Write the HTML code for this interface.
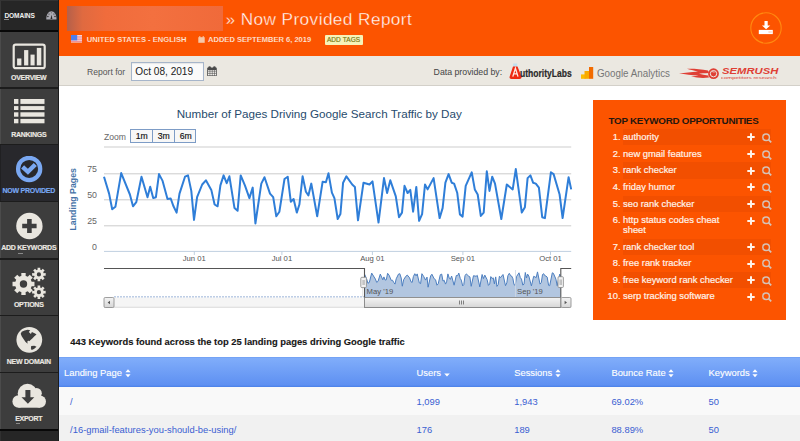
<!DOCTYPE html>
<html><head><meta charset="utf-8">
<style>
*{margin:0;padding:0;box-sizing:border-box}
html,body{width:800px;height:441px;overflow:hidden;background:#fff;font-family:"Liberation Sans",sans-serif;}
.a{position:absolute}
#side{position:absolute;left:0;top:0;width:59px;height:441px;background:#1c1c1c;}
#side .sec{position:absolute;left:0;width:57.5px;height:55px;background:#3d3d3d;border-left:1.2px solid #4b4b4b}
#side .lbl{position:absolute;left:0;width:57.5px;text-align:center;font-weight:bold;font-size:7px;color:#ebe8e2;white-space:nowrap;letter-spacing:-0.27px;-webkit-text-stroke:0.15px currentColor}
#hdr{position:absolute;left:59px;top:0;width:741px;height:56px;background:#fc5400;}
#bar{position:absolute;left:59px;top:56px;width:741px;height:29.8px;background:#ebe8e1;border-bottom:1.5px solid #d3d0c9}
</style></head><body>

<div id="side">
  <div class="a" style="left:0;top:0;width:57.5px;height:29.7px;background:#262626;border-top:1px solid #333;border-left:1.2px solid #363636"></div>
  <div class="a" style="left:4.4px;top:12px;font-weight:bold;font-size:6.6px;color:#f0f0f0;letter-spacing:-0.1px">DOMAINS</div>
  <div class="a" style="left:4.4px;top:18.8px;width:4.3px;height:0.8px;background:#8a8a8a"></div>
  <svg class="a" style="left:45.5px;top:11px" width="11" height="9" viewBox="0 0 11 9">
    <path d="M0.3,8.6 C0.1,3.2 2.6,0.2 5.4,0.2 C8.2,0.2 10.7,3.2 10.5,8.6 Z" fill="#a9a9b1"/>
    <circle cx="1.9" cy="5.5" r="0.75" fill="#2a2a2a"/><circle cx="9" cy="5.5" r="0.75" fill="#2a2a2a"/>
    <circle cx="3" cy="3" r="0.6" fill="#2a2a2a"/><circle cx="7.9" cy="3" r="0.6" fill="#2a2a2a"/><circle cx="5.4" cy="1.7" r="0.5" fill="#555"/>
    <path d="M4.5,8 L5.5,3.8 L6.4,8 Z" fill="#2a2a2a"/>
  </svg>

  <!-- OVERVIEW -->
  <div class="sec" style="top:32px;height:54.9px"></div>
  <svg class="a" style="left:12px;top:42.5px" width="35" height="28" viewBox="0 0 35 28">
    <rect x="1.7" y="1.6" width="31" height="23.6" rx="2" fill="none" stroke="#e9e6df" stroke-width="2.2"/>
    <rect x="5.1" y="15.5" width="4.3" height="6.9" fill="#e9e6df"/>
    <rect x="12.1" y="7.1" width="4.2" height="15.3" fill="#e9e6df"/>
    <rect x="18.5" y="11.6" width="4.1" height="10.8" fill="#e9e6df"/>
    <rect x="24.8" y="4.9" width="4.5" height="17.5" fill="#e9e6df"/>
  </svg>
  <div class="lbl" style="top:73.8px">OVERVIEW</div>

  <!-- RANKINGS -->
  <div class="sec" style="top:88.9px;height:55.1px"></div>
  <svg class="a" style="left:14px;top:99px" width="31" height="25" viewBox="0 0 31 25">
    <rect x="0" y="0" width="4.4" height="4.9" fill="#e9e6df"/><rect x="6.4" y="0" width="24.1" height="4.9" fill="#e9e6df"/>
    <rect x="0" y="7.1" width="4.4" height="3.9" fill="#e9e6df"/><rect x="6.4" y="7.1" width="24.1" height="3.9" fill="#e9e6df"/>
    <rect x="0" y="13.3" width="4.4" height="4.4" fill="#e9e6df"/><rect x="6.4" y="13.3" width="24.1" height="4.4" fill="#e9e6df"/>
    <rect x="0" y="19.9" width="4.4" height="4.4" fill="#e9e6df"/><rect x="6.4" y="19.9" width="24.1" height="4.4" fill="#e9e6df"/>
  </svg>
  <div class="lbl" style="top:130.7px">RANKINGS</div>

  <!-- NOW PROVIDED -->
  <div class="sec" style="top:145.3px;height:55.7px;background:#28282c;border-left:1.3px solid #202022"></div>
  <svg class="a" style="left:15px;top:156px" width="29" height="29" viewBox="0 0 29 29">
    <circle cx="14.15" cy="12.95" r="11.1" fill="none" stroke="#7aa8f2" stroke-width="4.2"/>
    <path d="M7.6,10.9 L12.9,15.8 L20.3,8.5" fill="none" stroke="#7aa8f2" stroke-width="4.4" stroke-linecap="butt" stroke-linejoin="miter"/>
  </svg>
  <div class="lbl" style="top:187.2px;color:#79a8f4">NOW PROVIDED</div>

  <!-- ADD KEYWORDS -->
  <div class="sec" style="top:201.8px;height:55.9px"></div>
  <svg class="a" style="left:15px;top:212px" width="29" height="29" viewBox="0 0 29 29">
    <circle cx="14.4" cy="14" r="13.2" fill="#e9e6df"/>
    <path d="M14.4,7 V21 M7.2,14 H21.6" stroke="#3d3d3d" stroke-width="4.6"/>
  </svg>
  <div class="lbl" style="top:244.3px">ADD KEYWORDS</div>
  <div class="a" style="left:17.8px;top:253px;width:5px;height:0.9px;background:#8a8a8a"></div>

  <!-- OPTIONS -->
  <div class="sec" style="top:260px;height:54.6px"></div>
  <svg class="a" style="left:12px;top:266px" width="36" height="34" viewBox="0 0 36 34">
    <g fill="#e9e6df">
      <path fill-rule="evenodd" d="M19.26,14.79 L19.62,15.85 L22.48,15.81 L22.48,20.19 L19.62,20.15 L19.26,21.21 L18.76,22.22 L20.81,24.22 L17.72,27.31 L15.72,25.26 L14.71,25.76 L13.65,26.12 L13.69,28.98 L9.31,28.98 L9.35,26.12 L8.29,25.76 L7.28,25.26 L5.28,27.31 L2.19,24.22 L4.24,22.22 L3.74,21.21 L3.38,20.15 L0.52,20.19 L0.52,15.81 L3.38,15.85 L3.74,14.79 L4.24,13.78 L2.19,11.78 L5.28,8.69 L7.28,10.74 L8.29,10.24 L9.35,9.88 L9.31,7.02 L13.69,7.02 L13.65,9.88 L14.71,10.24 L15.72,10.74 L17.72,8.69 L20.81,11.78 L18.76,13.78 Z M15.20,18.00 A3.7,3.7 0 1 0 7.80,18.00 A3.7,3.7 0 1 0 15.20,18.00 Z"/><path fill-rule="evenodd" d="M31.43,6.52 L31.64,7.14 L33.67,7.05 L33.67,9.75 L31.64,9.66 L31.43,10.28 L31.14,10.86 L32.64,12.23 L30.73,14.14 L29.36,12.64 L28.78,12.93 L28.16,13.14 L28.25,15.17 L25.55,15.17 L25.64,13.14 L25.02,12.93 L24.44,12.64 L23.07,14.14 L21.16,12.23 L22.66,10.86 L22.37,10.28 L22.16,9.66 L20.13,9.75 L20.13,7.05 L22.16,7.14 L22.37,6.52 L22.66,5.94 L21.16,4.57 L23.07,2.66 L24.44,4.16 L25.02,3.87 L25.64,3.66 L25.55,1.63 L28.25,1.63 L28.16,3.66 L28.78,3.87 L29.36,4.16 L30.73,2.66 L32.64,4.57 L31.14,5.94 Z M29.00,8.40 A2.1,2.1 0 1 0 24.80,8.40 A2.1,2.1 0 1 0 29.00,8.40 Z"/><path fill-rule="evenodd" d="M31.43,24.32 L31.64,24.94 L33.67,24.85 L33.67,27.55 L31.64,27.46 L31.43,28.08 L31.14,28.66 L32.64,30.03 L30.73,31.94 L29.36,30.44 L28.78,30.73 L28.16,30.94 L28.25,32.97 L25.55,32.97 L25.64,30.94 L25.02,30.73 L24.44,30.44 L23.07,31.94 L21.16,30.03 L22.66,28.66 L22.37,28.08 L22.16,27.46 L20.13,27.55 L20.13,24.85 L22.16,24.94 L22.37,24.32 L22.66,23.74 L21.16,22.37 L23.07,20.46 L24.44,21.96 L25.02,21.67 L25.64,21.46 L25.55,19.43 L28.25,19.43 L28.16,21.46 L28.78,21.67 L29.36,21.96 L30.73,20.46 L32.64,22.37 L31.14,23.74 Z M29.00,26.20 A2.1,2.1 0 1 0 24.80,26.20 A2.1,2.1 0 1 0 29.00,26.20 Z"/>
    </g>
  </svg>
  <div class="lbl" style="top:301.2px">OPTIONS</div>

  <!-- NEW DOMAIN -->
  <div class="sec" style="top:316.2px;height:55.6px"></div>
  <svg class="a" style="left:15px;top:326px" width="29" height="29" viewBox="0 0 29 29">
    <circle cx="14.3" cy="13.8" r="12.9" fill="#e9e6df"/>
    <path d="M5.7,7.8 L6.7,5.7 L9.5,4.6 L12.7,3.8 L15.2,4.3 L13.8,6 L15.9,8.1 L16.9,6 L20.1,7.4 L21.5,8.5 L19.4,10.2 L17.3,12.4 L15.5,14.1 L13.8,15.9 L12.4,17.6 L10.6,15.9 L8.5,13.1 L6.7,10.2 Z" fill="#3d3d3d"/>
    <circle cx="13.6" cy="16" r="1.3" fill="#e9e6df"/>
    <path d="M16.2,20.1 L19.4,19.7 L21.5,20.8 L19,22.9 L16.6,23.9 L15.9,22.2 Z" fill="#3d3d3d"/>
  </svg>
  <div class="lbl" style="top:358.3px">NEW DOMAIN</div>

  <!-- EXPORT -->
  <div class="sec" style="top:373.1px;height:55.9px"></div>
  <svg class="a" style="left:12px;top:382px" width="35" height="27" viewBox="0 0 35 27">
    <g fill="#e9e6df">
      <circle cx="15.5" cy="11.6" r="9.8"/><circle cx="24.6" cy="11.2" r="5.2"/>
      <circle cx="6.6" cy="19.5" r="6.2"/><circle cx="27.9" cy="19.6" r="6.1"/>
      <rect x="6.6" y="12" width="21.3" height="13.7"/>
    </g>
    <path d="M13.4,8 H18.4 V15.3 H22.3 L15.9,21.8 L9.5,15.3 H13.4 Z" fill="#3d3d3d"/>
  </svg>
  <div class="lbl" style="top:414.5px">EXPORT</div>
  <div class="a" style="left:15.9px;top:423.2px;width:4.4px;height:0.9px;background:#8a8a8a"></div>

  <div class="sec" style="top:431px;height:20px;background:#262626;border-left-color:#303030"></div>
  <div class="a" style="left:0;top:429px;width:57.5px;height:2px;background:#080808"></div>
  <div class="a" style="left:0;top:29.7px;width:57.5px;height:2.3px;background:#080808"></div>
</div>

<!-- HEADER -->
<div id="hdr">
  <div class="a" style="left:7.7px;top:5.8px;width:156.3px;height:24.9px;background:linear-gradient(90deg,#b5604a 0%,#e06a40 10%,#f06c3c 25%,#f3703f 55%,#f06a3a 100%)"></div>
  <div class="a" style="left:166.5px;top:9.3px;font-size:17.2px;color:#fff;white-space:nowrap;letter-spacing:0.43px;-webkit-text-stroke:0.35px #fc5400;paint-order:normal">» Now Provided Report</div>
  <svg class="a" style="left:11.8px;top:35.4px" width="11.2" height="7.6" viewBox="0 0 11.2 7.6">
    <rect width="11.2" height="7.6" fill="#f4d4d8"/>
    <rect x="0" y="1.4" width="11.2" height="1.1" fill="#f08a8e"/><rect x="0" y="3.6" width="11.2" height="1.1" fill="#f08a8e"/><rect x="0" y="5.8" width="11.2" height="1.1" fill="#f08a8e"/>
    <rect width="6.2" height="5.4" fill="#4f7ef0"/>
  </svg>
  <div class="a" style="left:27.8px;top:35.2px;font-weight:bold;font-size:7.6px;color:#fde8dc;white-space:nowrap;letter-spacing:0px;-webkit-text-stroke:0.1px #fc5400">UNITED STATES - ENGLISH</div>
  <svg class="a" style="left:139.2px;top:36px" width="7" height="7" viewBox="0 0 7 7">
    <rect x="0.3" y="1.2" width="6.4" height="5.6" fill="#f6c8a8"/>
    <rect x="1.3" y="0" width="1" height="2" fill="#f6c8a8"/><rect x="4.7" y="0" width="1" height="2" fill="#f6c8a8"/>
  </svg>
  <div class="a" style="left:149px;top:35.2px;font-weight:bold;font-size:7.55px;color:#fde8dc;white-space:nowrap;letter-spacing:0px;-webkit-text-stroke:0.1px #fc5400">ADDED SEPTEMBER 6, 2019</div>
  <div class="a" style="left:265.5px;top:34.5px;width:38.2px;height:10.4px;background:#f7f3b8;border-radius:1px;font-size:6.5px;color:#76750f;text-align:center;line-height:10.8px;white-space:nowrap;letter-spacing:0.1px;-webkit-text-stroke:0.15px #76750f">ADD TAGS</div>
  <svg class="a" style="left:690px;top:11px" width="34" height="34" viewBox="0 0 34 34">
    <circle cx="17" cy="17" r="15.2" fill="none" stroke="#ff8a10" stroke-width="1.1"/>
    <path d="M15.5,9.9 H18.7 V14.4 H21.3 L17.1,18.3 L12.9,14.4 H15.5 Z" fill="#fff"/>
    <rect x="9.8" y="18.9" width="14" height="4.2" fill="#fff"/>
    <rect x="19.6" y="20.5" width="1.1" height="1" fill="#f4a070"/><rect x="21.4" y="20.5" width="1.1" height="1" fill="#f4a070"/>
  </svg>
</div>

<!-- REPORT BAR -->
<div id="bar">
  <div class="a" style="left:28px;top:10.9px;font-size:8.6px;color:#555;white-space:nowrap">Report for</div>
  <div class="a" style="left:72px;top:5.6px;width:72.8px;height:19.3px;background:#fafafa;border:1.3px solid #a6b5ca;box-shadow:inset 0 1px 1px rgba(0,0,0,0.08)"></div>
  <div class="a" style="left:76.3px;top:9.8px;font-size:10.1px;color:#222;white-space:nowrap">Oct 08, 2019</div>
  <svg class="a" style="left:148px;top:9.7px" width="10" height="10.4" viewBox="0 0 10 10.4">
    <rect x="0.2" y="1.6" width="9.6" height="8.6" rx="0.8" fill="#4a4a4a"/>
    <circle cx="2.6" cy="1.6" r="1.3" fill="#4a4a4a"/><circle cx="7.4" cy="1.6" r="1.3" fill="#4a4a4a"/>
    <g fill="#f4f2ee">
      <rect x="1" y="4.2" width="1.7" height="1.4"/><rect x="3.2" y="4.2" width="1.7" height="1.4"/><rect x="5.4" y="4.2" width="1.7" height="1.4"/><rect x="7.6" y="4.2" width="1.5" height="1.4"/>
      <rect x="1" y="6.1" width="1.7" height="1.4"/><rect x="3.2" y="6.1" width="1.7" height="1.4"/><rect x="5.4" y="6.1" width="1.7" height="1.4"/><rect x="7.6" y="6.1" width="1.5" height="1.4"/>
      <rect x="1" y="8" width="1.7" height="1.4"/><rect x="3.2" y="8" width="1.7" height="1.4"/><rect x="5.4" y="8" width="1.7" height="1.4"/><rect x="7.6" y="8" width="1.5" height="1.4"/>
    </g>
  </svg>
  <div class="a" style="left:374.6px;top:10.5px;font-size:8.75px;color:#444;white-space:nowrap">Data provided by:</div>
  <!-- AuthorityLabs -->
  <svg class="a" style="left:449.5px;top:6.5px" width="13" height="17" viewBox="0 0 13 17">
    <rect x="4.2" y="0.5" width="4" height="3.2" fill="#bfe0f0"/>
    <path d="M4,3.4 H8.5 L12.5,13.5 C12.9,15 12,16 10.5,16 H2.5 C1,16 0.2,15 0.6,13.8 Z" fill="#ee2a12"/>
    <path d="M3.8,13.6 L6.4,5.2 L9,13.6 M4.9,10.8 H7.9" stroke="#ffe8e0" stroke-width="1.3" fill="none"/>
  </svg>
  <div class="a" style="left:461.3px;top:11.8px;font-weight:bold;font-size:10.3px;color:#2a2a2a;-webkit-text-stroke:0.2px #2a2a2a;white-space:nowrap;transform:scaleX(0.83);transform-origin:left top">uthorityLabs</div>
  <!-- GA -->
  <svg class="a" style="left:521.5px;top:10.6px" width="13" height="12" viewBox="0 0 13 12">
    <rect x="0" y="7.4" width="4.5" height="4.4" fill="#fbbc04"/>
    <rect x="3.5" y="4" width="4.8" height="7.8" fill="#f9ab00"/>
    <rect x="8" y="0" width="4.2" height="11.8" fill="#f26b00"/>
  </svg>
  <div class="a" style="left:537.7px;top:10.7px;font-size:11px;color:#767676;white-space:nowrap;transform:scaleX(0.89);transform-origin:left top">Google Analytics</div>
  <!-- SEMrush -->
  <svg class="a" style="left:619.5px;top:11.6px" width="42" height="12" viewBox="0 0 42 12">
    <g fill="#df3f35">
      <path d="M0,5.6 C6,5 12,4.2 19,3.6 C14,2.6 11,1.6 8,0.8 C15,0.6 22,1.2 29,2.5 L30,5 C25,5.2 22,5.5 20,5.8 C23,6.4 26,7 29,7.4 L30,9.5 C24,10.5 18,9.8 12,8.6 C16,8.4 18,8 19.5,7.6 C13,7.2 6,6.4 0,5.6 Z"/>
      <circle cx="34.5" cy="5.7" r="5.4"/>
    </g>
    <circle cx="34.5" cy="5.7" r="3.2" fill="none" stroke="#ece9e3" stroke-width="1"/>
    <path d="M33.2,3.6 L35.5,4.2" stroke="#ece9e3" stroke-width="0.8"/>
  </svg>
  <div class="a" style="left:663px;top:11.1px;font-weight:bold;font-style:italic;font-size:8.2px;line-height:9px;color:#df3f35;white-space:nowrap;transform:scaleX(1.375);transform-origin:left top">SEMRUSH</div>
  <div class="a" style="left:662px;top:18.8px;font-size:4.2px;line-height:5px;color:#df3f35;white-space:nowrap;transform:scaleX(1.42);transform-origin:left top">competitors research</div>
</div>

<!-- CHART -->
<div class="a" style="left:176.7px;top:106.5px;font-size:11.65px;color:#274b6d;white-space:nowrap">Number of Pages Driving Google Search Traffic by Day</div>
<div class="a" style="left:104px;top:132px;font-size:8.6px;color:#666;white-space:nowrap">Zoom</div>
<div class="a" style="left:130.3px;top:129px;width:65.7px;height:13.8px;border:1px solid #7d9cc6;background:#f7f7f7"></div>
<div class="a" style="left:152.2px;top:129px;width:1px;height:13.8px;background:#7d9cc6"></div>
<div class="a" style="left:174px;top:129px;width:1px;height:13.8px;background:#7d9cc6"></div>
<div class="a" style="left:131px;top:130.9px;width:21.5px;text-align:center;font-size:8.7px;color:#111;-webkit-text-stroke:0.15px #111">1m</div>
<div class="a" style="left:153px;top:130.9px;width:21.5px;text-align:center;font-size:8.7px;color:#111;-webkit-text-stroke:0.15px #111">3m</div>
<div class="a" style="left:175px;top:130.9px;width:21.5px;text-align:center;font-size:8.7px;color:#111;-webkit-text-stroke:0.15px #111">6m</div>

<svg class="a" style="left:0;top:0" width="590" height="320" viewBox="0 0 590 320">
  <rect x="104" y="146.3" width="467.2" height="1.4" fill="#dcdcdc"/>
  <rect x="104" y="173.1" width="467.2" height="1.3" fill="#d8d8d8"/>
  <rect x="104" y="199.1" width="467.2" height="1.3" fill="#d8d8d8"/>
  <rect x="104" y="225.1" width="467.2" height="1.3" fill="#d8d8d8"/>
  <rect x="104" y="250.9" width="467.2" height="1" fill="#c0d0e0"/>
  <g stroke="#c0d0e0" stroke-width="1">
    <path d="M194.3,251 V255 M281.9,251 V255 M372.4,251 V255 M462.9,251 V255 M550.5,251 V255"/>
  </g>
  <g font-family="Liberation Sans" font-size="8.8" fill="#666" text-anchor="end">
    <text x="97" y="172">75</text><text x="97" y="198">50</text><text x="97" y="224">25</text><text x="97" y="250">0</text>
  </g>
  <g font-family="Liberation Sans" font-size="7.7" fill="#555" text-anchor="middle">
    <text x="194.3" y="261.3">Jun 01</text><text x="281.9" y="261.3">Jul 01</text><text x="372.4" y="261.3">Aug 01</text><text x="462.9" y="261.3">Sep 01</text><text x="550.5" y="261.3">Oct 01</text>
  </g>
  <text transform="translate(76.2,199.3) rotate(-90)" font-family="Liberation Sans" font-weight="bold" font-size="8.8" fill="#4572a7" text-anchor="middle">Landing Pages</text>
  <path d="M104.0,176.7 L109.1,193.6 L112.2,209.3 L115.4,206.8 L121.2,173.1 L129.9,194.5 L133.0,206.3 L136.3,202.1 L141.5,176.7 L147.5,197.2 L150.2,186.8 L153.2,198.1 L155.9,197.2 L159.0,174.1 L162.6,180.9 L167.5,199.0 L170.7,198.5 L173.5,206.3 L176.6,212.6 L179.5,193.6 L185.0,176.7 L188.0,175.4 L191.3,190.9 L194.0,219.9 L197.1,197.2 L202.2,184.5 L205.9,180.3 L211.3,189.9 L214.6,204.5 L217.6,206.3 L220.4,185.4 L223.6,175.4 L226.7,183.2 L229.4,176.3 L234.5,208.1 L237.6,210.8 L240.7,175.4 L244.9,185.4 L249.4,198.1 L252.7,187.6 L255.4,223.5 L261.3,183.6 L264.5,177.2 L270.0,193.6 L273.2,197.2 L276.3,216.3 L279.4,211.7 L284.5,179.0 L287.7,176.7 L290.8,201.7 L293.6,199.0 L296.8,212.6 L299.4,204.5 L302.6,176.3 L305.9,191.8 L308.4,195.4 L311.3,183.6 L317.2,216.3 L322.6,181.8 L325.9,182.2 L328.5,173.3 L331.9,192.7 L334.4,198.1 L337.7,219.0 L340.4,214.1 L343.1,182.7 L346.4,176.3 L352.2,184.5 L354.9,186.9 L358.0,220.3 L363.5,182.7 L369.5,184.5 L372.5,181.4 L378.5,222.6 L384.0,178.1 L387.1,193.0 L390.3,180.3 L395.8,196.3 L399.0,217.2 L402.0,212.6 L404.5,185.8 L407.6,193.0 L410.3,189.9 L413.1,211.7 L416.3,186.9 L419.1,220.8 L422.1,214.1 L425.0,184.5 L427.6,189.4 L433.6,178.1 L439.6,218.1 L442.6,208.1 L445.4,182.7 L448.6,174.1 L451.7,182.7 L454.1,183.6 L457.2,192.7 L459.9,214.4 L462.6,216.6 L465.7,185.8 L471.7,172.3 L474.8,189.4 L477.7,194.5 L480.8,215.9 L483.7,212.6 L486.8,171.3 L489.5,190.9 L492.2,176.7 L495.0,183.6 L501.3,219.0 L506.8,184.5 L512.7,189.4 L515.8,169.1 L521.8,212.6 L524.9,207.2 L527.6,178.1 L530.4,175.4 L533.1,182.7 L535.8,183.6 L538.9,187.6 L542.2,217.2 L544.9,218.1 L550.9,172.3 L553.6,174.1 L559.6,194.5 L562.6,218.1 L568.6,177.2 L571.2,189.4" fill="none" stroke="#2f7ed8" stroke-width="2" stroke-linejoin="round"/>

  <!-- navigator -->
  <path d="M364.5,274.1 L366.6,278.8 L367.9,283.2 L369.3,282.5 L371.7,273.1 L375.4,279.1 L376.7,282.4 L378.1,281.2 L380.3,274.1 L382.8,279.8 L383.9,276.9 L385.2,280.1 L386.3,279.8 L387.6,273.3 L389.1,275.2 L391.2,280.3 L392.5,280.2 L393.7,282.4 L395.0,284.1 L396.2,278.8 L398.5,274.1 L399.8,273.7 L401.2,278.0 L402.3,286.2 L403.6,279.8 L405.8,276.3 L407.3,275.1 L409.6,277.8 L411.0,281.9 L412.2,282.4 L413.4,276.5 L414.8,273.7 L416.1,275.9 L417.2,273.9 L419.3,282.9 L420.6,283.6 L421.9,273.7 L423.7,276.5 L425.6,280.1 L427.0,277.1 L428.1,287.2 L430.6,276.0 L431.9,274.2 L434.2,278.8 L435.6,279.8 L436.9,285.2 L438.2,283.9 L440.3,274.7 L441.7,274.1 L443.0,281.1 L444.2,280.3 L445.5,284.1 L446.6,281.9 L447.9,273.9 L449.3,278.3 L450.4,279.3 L451.6,276.0 L454.1,285.2 L456.3,275.5 L457.7,275.6 L458.8,273.1 L460.3,278.6 L461.3,280.1 L462.7,285.9 L463.8,284.6 L465.0,275.7 L466.3,273.9 L468.8,276.3 L469.9,276.9 L471.2,286.3 L473.5,275.7 L476.1,276.3 L477.3,275.4 L479.8,286.9 L482.1,274.5 L483.4,278.6 L484.8,275.1 L487.1,279.6 L488.4,285.4 L489.7,284.1 L490.8,276.6 L492.1,278.6 L493.2,277.8 L494.4,283.9 L495.7,276.9 L496.9,286.4 L498.2,284.6 L499.4,276.3 L500.5,277.6 L503.0,274.5 L505.5,285.7 L506.8,282.9 L507.9,275.7 L509.3,273.3 L510.6,275.7 L511.6,276.0 L512.9,278.6 L514.0,284.6 L515.2,285.3 L516.5,276.6 L519.0,272.8 L520.3,277.6 L521.5,279.1 L522.8,285.1 L524.0,284.1 L525.3,272.5 L526.5,278.0 L527.6,274.1 L528.8,276.0 L531.4,285.9 L533.7,276.3 L536.2,277.6 L537.5,271.9 L540.0,284.1 L541.3,282.6 L542.5,274.5 L543.7,273.7 L544.8,275.7 L545.9,276.0 L547.2,277.1 L548.6,285.4 L549.7,285.7 L552.3,272.8 L553.4,273.3 L555.9,279.1 L557.2,285.7 L559.7,274.2 L560.8,277.6 L560.8,297 L364.5,297 Z" fill="#b2c6e0"/>
  <path d="M364.5,274.1 L366.6,278.8 L367.9,283.2 L369.3,282.5 L371.7,273.1 L375.4,279.1 L376.7,282.4 L378.1,281.2 L380.3,274.1 L382.8,279.8 L383.9,276.9 L385.2,280.1 L386.3,279.8 L387.6,273.3 L389.1,275.2 L391.2,280.3 L392.5,280.2 L393.7,282.4 L395.0,284.1 L396.2,278.8 L398.5,274.1 L399.8,273.7 L401.2,278.0 L402.3,286.2 L403.6,279.8 L405.8,276.3 L407.3,275.1 L409.6,277.8 L411.0,281.9 L412.2,282.4 L413.4,276.5 L414.8,273.7 L416.1,275.9 L417.2,273.9 L419.3,282.9 L420.6,283.6 L421.9,273.7 L423.7,276.5 L425.6,280.1 L427.0,277.1 L428.1,287.2 L430.6,276.0 L431.9,274.2 L434.2,278.8 L435.6,279.8 L436.9,285.2 L438.2,283.9 L440.3,274.7 L441.7,274.1 L443.0,281.1 L444.2,280.3 L445.5,284.1 L446.6,281.9 L447.9,273.9 L449.3,278.3 L450.4,279.3 L451.6,276.0 L454.1,285.2 L456.3,275.5 L457.7,275.6 L458.8,273.1 L460.3,278.6 L461.3,280.1 L462.7,285.9 L463.8,284.6 L465.0,275.7 L466.3,273.9 L468.8,276.3 L469.9,276.9 L471.2,286.3 L473.5,275.7 L476.1,276.3 L477.3,275.4 L479.8,286.9 L482.1,274.5 L483.4,278.6 L484.8,275.1 L487.1,279.6 L488.4,285.4 L489.7,284.1 L490.8,276.6 L492.1,278.6 L493.2,277.8 L494.4,283.9 L495.7,276.9 L496.9,286.4 L498.2,284.6 L499.4,276.3 L500.5,277.6 L503.0,274.5 L505.5,285.7 L506.8,282.9 L507.9,275.7 L509.3,273.3 L510.6,275.7 L511.6,276.0 L512.9,278.6 L514.0,284.6 L515.2,285.3 L516.5,276.6 L519.0,272.8 L520.3,277.6 L521.5,279.1 L522.8,285.1 L524.0,284.1 L525.3,272.5 L526.5,278.0 L527.6,274.1 L528.8,276.0 L531.4,285.9 L533.7,276.3 L536.2,277.6 L537.5,271.9 L540.0,284.1 L541.3,282.6 L542.5,274.5 L543.7,273.7 L544.8,275.7 L545.9,276.0 L547.2,277.1 L548.6,285.4 L549.7,285.7 L552.3,272.8 L553.4,273.3 L555.9,279.1 L557.2,285.7 L559.7,274.2 L560.8,277.6" fill="none" stroke="#4d7fc0" stroke-width="1"/>
  <path d="M114,297 H364.5" stroke="#7d9ccc" stroke-width="1" stroke-dasharray="2,1"/>
  <rect x="362" y="285" width="0.8" height="12" fill="#e4e4e4"/>
  <rect x="515" y="270" width="0.8" height="27" fill="#cfd8e4"/>
  <g font-family="Liberation Sans" font-size="7.7" fill="#555">
    <text x="366.5" y="294.3">May '19</text><text x="517" y="294.3">Sep '19</text>
  </g>
  <path d="M104,268.5 H364.5 V297.5 M560.8,297.5 V268.5 H571.2" fill="none" stroke="#555" stroke-width="1.1"/>
  <!-- scrollbar -->
  <rect x="104" y="297.5" width="467.2" height="10" fill="#f5f5f5"/><rect x="104" y="306.8" width="467.2" height="0.8" fill="#d2d2d2"/>
  <defs><linearGradient id="sg" x1="0" y1="0" x2="0" y2="1"><stop offset="0" stop-color="#f4f4f4"/><stop offset="1" stop-color="#d6d6d6"/></linearGradient></defs>
  <rect x="364.5" y="297.5" width="196.3" height="10" fill="url(#sg)" stroke="#777" stroke-width="0.8"/>
  <path d="M459.5,300.5 V304.5 M461.5,300.5 V304.5 M463.5,300.5 V304.5" stroke="#666" stroke-width="0.8"/>
  <rect x="104" y="297.5" width="10" height="10" rx="1.2" fill="url(#sg)" stroke="#888" stroke-width="0.8"/>
  <path d="M107.6,302.5 L110,300.7 V304.3 Z" fill="#555"/>
  <rect x="561" y="297.5" width="10" height="10" rx="1.2" fill="url(#sg)" stroke="#888" stroke-width="0.8"/>
  <path d="M567,302.5 L564.6,300.7 V304.3 Z" fill="#555"/>
  <!-- handles -->
  <rect x="360.8" y="277.3" width="5.6" height="10.3" rx="1" fill="#f2f2f2" stroke="#888" stroke-width="0.8"/>
  <path d="M363,280 V285 M364.2,280 V285" stroke="#888" stroke-width="0.6"/>
  <rect x="558" y="276.7" width="5.4" height="10.8" rx="1" fill="#f2f2f2" stroke="#888" stroke-width="0.8"/>
  <path d="M560.1,279.5 V285 M561.3,279.5 V285" stroke="#888" stroke-width="0.6"/>
</svg>

<!-- KEYWORD BOX -->
<div class="a" style="left:593px;top:100px;width:193.3px;height:219.6px;background:#fc5400">
<div class="a" style="left:15.5px;top:14.8px;font-weight:bold;font-size:9.8px;letter-spacing:-0.26px;color:#26170f;white-space:nowrap">TOP KEYWORD OPPORTUNITIES</div>
<div class="a" style="left:30px;top:28.7px;width:148px;height:16.7px;background:#f24f00"></div>
<div class="a" style="left:0;top:30.9px;width:27.5px;text-align:right;font-size:9.4px;color:#fff3ea;white-space:nowrap;-webkit-text-stroke:0.2px #fff3ea">1.</div>
<div class="a" style="left:30px;top:30.9px;font-size:9.4px;line-height:9.6px;color:#fff3ea;white-space:nowrap;padding-top:1px;-webkit-text-stroke:0.2px #fff3ea">authority</div>
<svg class="a" style="left:154.4px;top:33.3px" width="8" height="8" viewBox="0 0 8 8"><path d="M4,0.3 V7.7 M0.3,4 H7.7" stroke="#fff3ea" stroke-width="2"/></svg>
<svg class="a" style="left:168.5px;top:32.8px" width="10" height="10" viewBox="0 0 10 10"><circle cx="4.1" cy="4.2" r="3.3" fill="none" stroke="#d6c2b6" stroke-width="1.45"/><path d="M6.5,6.6 L9.2,9.3" stroke="#d6c2b6" stroke-width="1.7"/></svg>
<div class="a" style="left:0;top:47.6px;width:27.5px;text-align:right;font-size:9.4px;color:#fff3ea;white-space:nowrap;-webkit-text-stroke:0.2px #fff3ea">2.</div>
<div class="a" style="left:30px;top:47.6px;font-size:9.4px;line-height:9.6px;color:#fff3ea;white-space:nowrap;padding-top:1px;-webkit-text-stroke:0.2px #fff3ea">new gmail features</div>
<svg class="a" style="left:154.4px;top:50.0px" width="8" height="8" viewBox="0 0 8 8"><path d="M4,0.3 V7.7 M0.3,4 H7.7" stroke="#fff3ea" stroke-width="2"/></svg>
<svg class="a" style="left:168.5px;top:49.5px" width="10" height="10" viewBox="0 0 10 10"><circle cx="4.1" cy="4.2" r="3.3" fill="none" stroke="#d6c2b6" stroke-width="1.45"/><path d="M6.5,6.6 L9.2,9.3" stroke="#d6c2b6" stroke-width="1.7"/></svg>
<div class="a" style="left:30px;top:62.1px;width:148px;height:16.7px;background:#f24f00"></div>
<div class="a" style="left:0;top:64.3px;width:27.5px;text-align:right;font-size:9.4px;color:#fff3ea;white-space:nowrap;-webkit-text-stroke:0.2px #fff3ea">3.</div>
<div class="a" style="left:30px;top:64.3px;font-size:9.4px;line-height:9.6px;color:#fff3ea;white-space:nowrap;padding-top:1px;-webkit-text-stroke:0.2px #fff3ea">rank checker</div>
<svg class="a" style="left:154.4px;top:66.7px" width="8" height="8" viewBox="0 0 8 8"><path d="M4,0.3 V7.7 M0.3,4 H7.7" stroke="#fff3ea" stroke-width="2"/></svg>
<svg class="a" style="left:168.5px;top:66.2px" width="10" height="10" viewBox="0 0 10 10"><circle cx="4.1" cy="4.2" r="3.3" fill="none" stroke="#d6c2b6" stroke-width="1.45"/><path d="M6.5,6.6 L9.2,9.3" stroke="#d6c2b6" stroke-width="1.7"/></svg>
<div class="a" style="left:0;top:81.0px;width:27.5px;text-align:right;font-size:9.4px;color:#fff3ea;white-space:nowrap;-webkit-text-stroke:0.2px #fff3ea">4.</div>
<div class="a" style="left:30px;top:81.0px;font-size:9.4px;line-height:9.6px;color:#fff3ea;white-space:nowrap;padding-top:1px;-webkit-text-stroke:0.2px #fff3ea">friday humor</div>
<svg class="a" style="left:154.4px;top:83.4px" width="8" height="8" viewBox="0 0 8 8"><path d="M4,0.3 V7.7 M0.3,4 H7.7" stroke="#fff3ea" stroke-width="2"/></svg>
<svg class="a" style="left:168.5px;top:82.9px" width="10" height="10" viewBox="0 0 10 10"><circle cx="4.1" cy="4.2" r="3.3" fill="none" stroke="#d6c2b6" stroke-width="1.45"/><path d="M6.5,6.6 L9.2,9.3" stroke="#d6c2b6" stroke-width="1.7"/></svg>
<div class="a" style="left:30px;top:95.5px;width:148px;height:16.7px;background:#f24f00"></div>
<div class="a" style="left:0;top:97.7px;width:27.5px;text-align:right;font-size:9.4px;color:#fff3ea;white-space:nowrap;-webkit-text-stroke:0.2px #fff3ea">5.</div>
<div class="a" style="left:30px;top:97.7px;font-size:9.4px;line-height:9.6px;color:#fff3ea;white-space:nowrap;padding-top:1px;-webkit-text-stroke:0.2px #fff3ea">seo rank checker</div>
<svg class="a" style="left:154.4px;top:100.1px" width="8" height="8" viewBox="0 0 8 8"><path d="M4,0.3 V7.7 M0.3,4 H7.7" stroke="#fff3ea" stroke-width="2"/></svg>
<svg class="a" style="left:168.5px;top:99.6px" width="10" height="10" viewBox="0 0 10 10"><circle cx="4.1" cy="4.2" r="3.3" fill="none" stroke="#d6c2b6" stroke-width="1.45"/><path d="M6.5,6.6 L9.2,9.3" stroke="#d6c2b6" stroke-width="1.7"/></svg>
<div class="a" style="left:0;top:114.4px;width:27.5px;text-align:right;font-size:9.4px;color:#fff3ea;white-space:nowrap;-webkit-text-stroke:0.2px #fff3ea">6.</div>
<div class="a" style="left:30px;top:114.4px;font-size:9.4px;line-height:9.6px;color:#fff3ea;white-space:nowrap;padding-top:1px;-webkit-text-stroke:0.2px #fff3ea">http status codes cheat<br>sheet</div>
<svg class="a" style="left:154.4px;top:116.8px" width="8" height="8" viewBox="0 0 8 8"><path d="M4,0.3 V7.7 M0.3,4 H7.7" stroke="#fff3ea" stroke-width="2"/></svg>
<svg class="a" style="left:168.5px;top:116.3px" width="10" height="10" viewBox="0 0 10 10"><circle cx="4.1" cy="4.2" r="3.3" fill="none" stroke="#d6c2b6" stroke-width="1.45"/><path d="M6.5,6.6 L9.2,9.3" stroke="#d6c2b6" stroke-width="1.7"/></svg>
<div class="a" style="left:30px;top:138.5px;width:148px;height:16.5px;background:#f24f00"></div>
<div class="a" style="left:0;top:140.7px;width:27.5px;text-align:right;font-size:9.4px;color:#fff3ea;white-space:nowrap;-webkit-text-stroke:0.2px #fff3ea">7.</div>
<div class="a" style="left:30px;top:140.7px;font-size:9.4px;line-height:9.6px;color:#fff3ea;white-space:nowrap;padding-top:1px;-webkit-text-stroke:0.2px #fff3ea">rank checker tool</div>
<svg class="a" style="left:154.4px;top:143.1px" width="8" height="8" viewBox="0 0 8 8"><path d="M4,0.3 V7.7 M0.3,4 H7.7" stroke="#fff3ea" stroke-width="2"/></svg>
<svg class="a" style="left:168.5px;top:142.6px" width="10" height="10" viewBox="0 0 10 10"><circle cx="4.1" cy="4.2" r="3.3" fill="none" stroke="#d6c2b6" stroke-width="1.45"/><path d="M6.5,6.6 L9.2,9.3" stroke="#d6c2b6" stroke-width="1.7"/></svg>
<div class="a" style="left:0;top:157.2px;width:27.5px;text-align:right;font-size:9.4px;color:#fff3ea;white-space:nowrap;-webkit-text-stroke:0.2px #fff3ea">8.</div>
<div class="a" style="left:30px;top:157.2px;font-size:9.4px;line-height:9.6px;color:#fff3ea;white-space:nowrap;padding-top:1px;-webkit-text-stroke:0.2px #fff3ea">free rank tracker</div>
<svg class="a" style="left:154.4px;top:159.6px" width="8" height="8" viewBox="0 0 8 8"><path d="M4,0.3 V7.7 M0.3,4 H7.7" stroke="#fff3ea" stroke-width="2"/></svg>
<svg class="a" style="left:168.5px;top:159.1px" width="10" height="10" viewBox="0 0 10 10"><circle cx="4.1" cy="4.2" r="3.3" fill="none" stroke="#d6c2b6" stroke-width="1.45"/><path d="M6.5,6.6 L9.2,9.3" stroke="#d6c2b6" stroke-width="1.7"/></svg>
<div class="a" style="left:30px;top:171.5px;width:148px;height:16.5px;background:#f24f00"></div>
<div class="a" style="left:0;top:173.7px;width:27.5px;text-align:right;font-size:9.4px;color:#fff3ea;white-space:nowrap;-webkit-text-stroke:0.2px #fff3ea">9.</div>
<div class="a" style="left:30px;top:173.7px;font-size:9.4px;line-height:9.6px;color:#fff3ea;white-space:nowrap;padding-top:1px;-webkit-text-stroke:0.2px #fff3ea">free keyword rank checker</div>
<svg class="a" style="left:154.4px;top:176.1px" width="8" height="8" viewBox="0 0 8 8"><path d="M4,0.3 V7.7 M0.3,4 H7.7" stroke="#fff3ea" stroke-width="2"/></svg>
<svg class="a" style="left:168.5px;top:175.6px" width="10" height="10" viewBox="0 0 10 10"><circle cx="4.1" cy="4.2" r="3.3" fill="none" stroke="#d6c2b6" stroke-width="1.45"/><path d="M6.5,6.6 L9.2,9.3" stroke="#d6c2b6" stroke-width="1.7"/></svg>
<div class="a" style="left:0;top:190.2px;width:27.5px;text-align:right;font-size:9.4px;color:#fff3ea;white-space:nowrap;-webkit-text-stroke:0.2px #fff3ea">10.</div>
<div class="a" style="left:30px;top:190.2px;font-size:9.4px;line-height:9.6px;color:#fff3ea;white-space:nowrap;padding-top:1px;-webkit-text-stroke:0.2px #fff3ea">serp tracking software</div>
<svg class="a" style="left:154.4px;top:192.6px" width="8" height="8" viewBox="0 0 8 8"><path d="M4,0.3 V7.7 M0.3,4 H7.7" stroke="#fff3ea" stroke-width="2"/></svg>
<svg class="a" style="left:168.5px;top:192.1px" width="10" height="10" viewBox="0 0 10 10"><circle cx="4.1" cy="4.2" r="3.3" fill="none" stroke="#d6c2b6" stroke-width="1.45"/><path d="M6.5,6.6 L9.2,9.3" stroke="#d6c2b6" stroke-width="1.7"/></svg>
</div>

<!-- TABLE -->
<div class="a" style="left:70.3px;top:336px;font-weight:bold;font-size:9.4px;color:#161616;white-space:nowrap;-webkit-text-stroke:0.12px #161616">443 Keywords found across the top 25 landing pages driving Google traffic</div>
<div class="a" style="left:59px;top:357.2px;width:741px;height:29.5px;background:linear-gradient(#6c9cf2 0px,#80adfa 1.2px,#5e90f2 28px,#4f84ea 29.5px)"></div>
<div class="a" style="left:59px;top:386.7px;width:741px;height:28.3px;background:#f9f9f9"></div>
<div class="a" style="left:59px;top:415px;width:741px;height:26px;background:#f1f1f1"></div>
<div class="a" style="left:64px;top:367.0px;font-size:9.4px;color:#fff;white-space:nowrap;-webkit-text-stroke:0.12px #fff">Landing Page</div>
<svg class="a" style="left:124.6px;top:369.3px" width="6" height="9" viewBox="0 0 6 9"><path d="M3,0.3 L5.6,3.3 H0.4 Z M3,8.2 L5.6,5.2 H0.4 Z" fill="#fff"/></svg>
<div class="a" style="left:416.5px;top:367.0px;font-size:9.4px;color:#fff;white-space:nowrap;-webkit-text-stroke:0.12px #fff">Users</div>
<svg class="a" style="left:443.6px;top:369.3px" width="6" height="9" viewBox="0 0 6 9"><path d="M3,7.6 L5.8,4.6 H0.2 Z" fill="#fff"/></svg>
<div class="a" style="left:514.2px;top:367.0px;font-size:9.4px;color:#fff;white-space:nowrap;-webkit-text-stroke:0.12px #fff">Sessions</div>
<svg class="a" style="left:554.9px;top:369.3px" width="6" height="9" viewBox="0 0 6 9"><path d="M3,0.3 L5.6,3.3 H0.4 Z M3,8.2 L5.6,5.2 H0.4 Z" fill="#fff"/></svg>
<div class="a" style="left:611.4px;top:367.0px;font-size:9.4px;color:#fff;white-space:nowrap;-webkit-text-stroke:0.12px #fff">Bounce Rate</div>
<svg class="a" style="left:668.4px;top:369.3px" width="6" height="9" viewBox="0 0 6 9"><path d="M3,0.3 L5.6,3.3 H0.4 Z M3,8.2 L5.6,5.2 H0.4 Z" fill="#fff"/></svg>
<div class="a" style="left:708.5px;top:367.0px;font-size:9.4px;color:#fff;white-space:nowrap;-webkit-text-stroke:0.12px #fff">Keywords</div>
<svg class="a" style="left:752.4px;top:369.3px" width="6" height="9" viewBox="0 0 6 9"><path d="M3,0.3 L5.6,3.3 H0.4 Z M3,8.2 L5.6,5.2 H0.4 Z" fill="#fff"/></svg>
<div class="a" style="left:70.1px;top:395.7px;font-size:9.4px;color:#3a60d2;white-space:nowrap">/</div>
<div class="a" style="left:416.5px;top:395.7px;font-size:9.4px;color:#3a60d2;white-space:nowrap">1,099</div>
<div class="a" style="left:514.2px;top:395.7px;font-size:9.4px;color:#3a60d2;white-space:nowrap">1,943</div>
<div class="a" style="left:611.4px;top:395.7px;font-size:9.4px;color:#3a60d2;white-space:nowrap">69.02%</div>
<div class="a" style="left:708.5px;top:395.7px;font-size:9.4px;color:#3a60d2;white-space:nowrap">50</div>
<div class="a" style="left:70.1px;top:424.2px;font-size:9.4px;color:#3a60d2;white-space:nowrap">/16-gmail-features-you-should-be-using/</div>
<div class="a" style="left:416.5px;top:424.2px;font-size:9.4px;color:#3a60d2;white-space:nowrap">176</div>
<div class="a" style="left:514.2px;top:424.2px;font-size:9.4px;color:#3a60d2;white-space:nowrap">189</div>
<div class="a" style="left:611.4px;top:424.2px;font-size:9.4px;color:#3a60d2;white-space:nowrap">88.89%</div>
<div class="a" style="left:708.5px;top:424.2px;font-size:9.4px;color:#3a60d2;white-space:nowrap">50</div>
</body></html>
